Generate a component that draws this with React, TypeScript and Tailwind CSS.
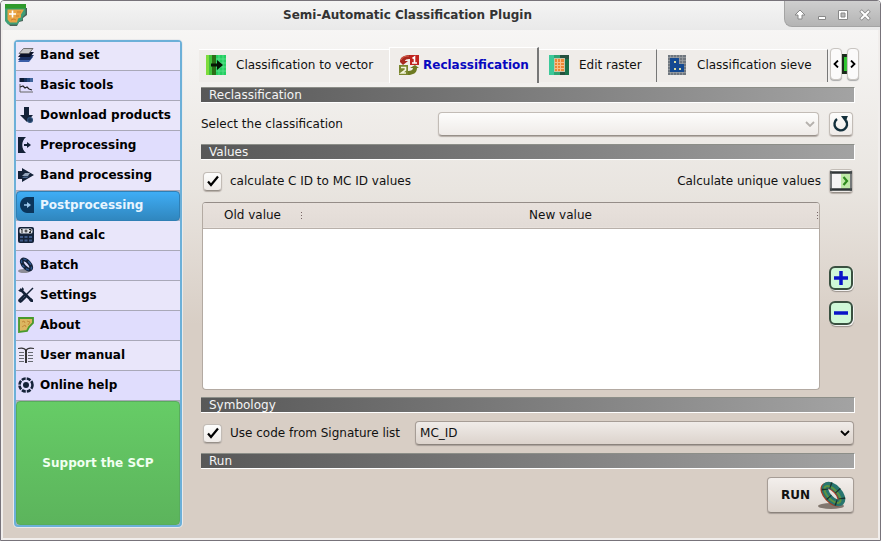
import React, { useState } from "react";

type IconProps = { className?: string };

const navy = "#142238";

function AppLogo({ className = "" }: IconProps) {
  return (
    <svg viewBox="0 0 22 22" className={className} aria-hidden="true">
      <path d="M2 4h20v7l-4 3v3l-4 1-2 4H5l-3-4z" fill="#4a6258" />
      <path d="M0 0h20.500v10l-3 3v3l-3 1-2 3.500H3L0 17z" fill="#3f9f78" />
      <path d="M0 0h21v4.500H0z" fill="#2f9a2c" />
      <path d="M2.500 5.500h16.500l-3 5v3l-3 1-1 4H5l-2.500-3z" fill="#e9a545" />
      <path d="M12 8h4M11 12h3M6 16l3-1 2 1" stroke="#cf7f2c" fill="none" />
      <path d="M7.500 6.500v7M4 10h7" stroke="#fff" strokeWidth="1.600" />
    </svg>
  );
}

function BandSetIcon() {
  return (
    <svg viewBox="0 0 16 16" className="size-4" aria-hidden="true">
      <path d="M0 15l4-5h11l-4 5z" fill="#3a5fa8" />
      <path d="M0 13l4-5h12l-4 5z" fill="#1a3060" />
      <path d="M0 10l4-5h12l-4 5z" fill="#0a1228" />
      <path d="M1 6.500l4.500-5h9.500l-4 5z" fill="#c6c6c6" stroke="#555" strokeWidth="0.800" />
    </svg>
  );
}

function BasicToolsIcon() {
  return (
    <svg viewBox="0 0 16 16" className="size-4" aria-hidden="true">
      <path d="M1.500 1H6v4H1.500z" fill="#0c1a34" />
      <path d="M6 1h3v4H6z" fill="#15305a" />
      <path d="M9 1h3v4H9z" fill="#23467a" />
      <path d="M12 1h3v4h-3z" fill="#41669c" />
      <path d="M2 7v8h13" stroke="#666" fill="none" />
      <path d="M2 10l3-1 2 2 2-1 2 2 3 1" stroke="#222" fill="none" strokeWidth="1.200" />
    </svg>
  );
}

function DownloadIcon() {
  return (
    <svg viewBox="0 0 16 16" className="size-4" aria-hidden="true">
      <path d="M6 0h5v8h4l-6 7-7-7h4z" fill={navy} />
      <circle cx="12" cy="13" r="3" fill="#2d4f77" />
      <path d="M10 13h4M12 11v4" stroke="#18304f" />
    </svg>
  );
}

function PreprocessingIcon() {
  return (
    <svg viewBox="0 0 16 16" className="size-4" aria-hidden="true">
      <path d="M0 0h8C3 4 3 12 8 16H0z" fill={navy} />
      <path d="M6 8h4" stroke={navy} strokeWidth="2" />
      <path d="M9 5l4 3-4 3z" fill={navy} />
    </svg>
  );
}

function BandProcessingIcon() {
  return (
    <svg viewBox="0 0 16 16" className="size-4" aria-hidden="true">
      <path d="M0 4h4V1l12 7-12 7v-3H0z" fill={navy} />
      <path d="M4 9l3-3h5l-2 3z" fill="#93a4bb" />
      <path d="M4 11l2-1.500h5L9 11z" fill="#49648b" />
    </svg>
  );
}

function PostprocessingIcon() {
  return (
    <svg viewBox="0 0 16 16" className="size-4" aria-hidden="true">
      <path d="M16 0v16H9C5 16 2 12 2 8s3-8 7-8z" fill="#0b355c" />
      <path d="M6 8h3" stroke="#9cc7ec" strokeWidth="1.500" />
      <path d="M9 5l4 3-4 3z" fill="#9cc7ec" />
    </svg>
  );
}

function BandCalcIcon() {
  return (
    <svg viewBox="0 0 16 16" className="size-4" aria-hidden="true">
      <rect width="16" height="16" rx="2" fill={navy} />
      <rect x="1.500" y="1.500" width="13" height="5" rx="1.500" fill="#dfe2e8" />
      <path d="M3 3l1-1v4M6.500 4h3M8 2.500v3M11 2.500h2V4l-2 1.500h2" stroke="#222" fill="none" />
      <path d="M2 9h3v2H2zM6.500 9h3v2h-3zM11 9h3v2h-3zM2 12.500h3v2H2zM6.500 12.500h3v2h-3zM11 12.500h3v2h-3z" fill="#3f5a88" />
    </svg>
  );
}

function BatchIcon() {
  return (
    <svg viewBox="0 0 16 16" className="size-4" aria-hidden="true">
      <ellipse cx="6" cy="14" rx="6" ry="2" fill="#8d8d96" />
      <ellipse cx="8.500" cy="7.500" rx="3" ry="6.200" transform="rotate(-42 8.500 7.500)" fill="none" stroke={navy} strokeWidth="3.800" />
      <ellipse cx="8.500" cy="7.500" rx="3.500" ry="6.500" transform="rotate(-42 8.500 7.500)" fill="none" stroke="#2c548c" strokeWidth="1.500" strokeDasharray="3 2" />
    </svg>
  );
}

function SettingsIcon() {
  return (
    <svg viewBox="0 0 16 16" className="size-4" aria-hidden="true">
      <path d="M2 2l12 12" stroke={navy} strokeWidth="2.500" />
      <path d="M0 3l2 2 3-1 1-2-2-2v2L2 3z" fill={navy} />
      <path d="M15 1L8 8" stroke={navy} strokeWidth="1.500" />
      <path d="M7 9l-4.500 4.500" stroke={navy} strokeWidth="4.500" strokeLinecap="round" />
      <path d="M7 9l-4 4" stroke="#53647e" strokeDasharray="1 1" />
      <path d="M11 13l2 2h2v-2l-2-2z" fill={navy} />
    </svg>
  );
}

function AboutIcon() {
  return (
    <svg viewBox="0 0 16 16" className="size-4" aria-hidden="true">
      <path d="M1 1h14v5l-4 4-2 4-8 1z" fill="#dcb660" stroke="#479a2c" strokeWidth="1.800" />
      <path d="M4 5l2-1 1 2M9 4l3 1-2 3M4 10l3-2 1 2" stroke="#c48a3c" fill="none" />
    </svg>
  );
}

function ManualIcon() {
  return (
    <svg viewBox="0 0 16 16" className="size-4" aria-hidden="true">
      <path d="M0 1.500c4-1 7 0 8 2 1-2 4-3 8-2" stroke="#333" fill="none" strokeWidth="1.200" />
      <path d="M8 3v13" stroke="#222" strokeWidth="1.800" />
      <path d="M1 5.500h5M1 8.500h5M1 11.500h5M1 14.500h5M10 5.500h5M10 8.500h5M10 11.500h5M10 14.500h5" stroke="#666a70" />
    </svg>
  );
}

function HelpIcon() {
  return (
    <svg viewBox="0 0 16 16" className="size-4" aria-hidden="true">
      <circle cx="8" cy="8" r="6.500" fill="none" stroke={navy} strokeWidth="2.600" strokeDasharray="4 1.100" />
      <circle cx="8" cy="8" r="3" fill={navy} />
    </svg>
  );
}

function VectorIcon() {
  return (
    <svg viewBox="0 0 20 20" className="size-5" aria-hidden="true">
      <path d="M0 0h10v20H0z" fill="#3f8f1e" />
      <path d="M0 0h6v20H0z" fill="#7edc3c" />
      <path d="M3 0h3v20H3z" fill="#3fbf3a" />
      <path d="M6 0h4v20H6z" fill="#2c6e18" />
      <path d="M10 0h10v20H10z" fill="#25cf62" />
      <path d="M13 0v20M17 0v20M10 4h10M10 8h10M10 12h10M10 16h10" stroke="#66e292" strokeWidth="0.700" />
      <path d="M5 8.500h6V5l6 5-6 5v-3.500H5z" fill="#051505" />
    </svg>
  );
}

function ReclassIcon() {
  return (
    <svg viewBox="0 0 20 20" className="size-5" aria-hidden="true">
      <path d="M1 7C1 2 5 0 11 0v4C7 4 6 5 6 6h3l-5 4-4-4z" fill="#a8281e" />
      <path d="M2 5c1-3 4-4 8-4" stroke="#d8604c" fill="none" />
      <rect x="11" width="9" height="10" fill="#c02420" />
      <path d="M13.500 3.500l2-1.500v6M13 8h5" stroke="#fff" strokeWidth="1.600" fill="none" />
      <rect y="10" width="9" height="10" fill="#7a862e" />
      <path d="M2 12.500h4.500v2.500L2.500 18H7" stroke="#f4f4dc" strokeWidth="1.600" fill="none" />
      <path d="M9 16c3 0 5-1 5-3h-3l5-3 4 3h-2c0 5-4 7-9 7z" fill="#6e7a22" />
    </svg>
  );
}

function EditRasterIcon() {
  return (
    <svg viewBox="0 0 20 20" className="size-5" aria-hidden="true">
      <rect width="20" height="20" fill="#25513f" />
      <path d="M0 0h5v20H0z" fill="#3cc99a" />
      <path d="M5 0h6v20H5z" fill="#2fa473" />
      <path d="M16 4h4v16h-4z" fill="#18724a" />
      <rect x="5.500" y="3.500" width="10" height="13" fill="#ef8634" stroke="#c9c2a6" />
      <path d="M8.500 4v12M11.500 4v12M6 7.500h9M6 10.500h9M6 13.500h9" stroke="#f8c18a" />
    </svg>
  );
}

function SieveIcon() {
  return (
    <svg viewBox="0 0 18 20" className="h-5 w-[18px]" aria-hidden="true">
      <rect width="18" height="20" fill="#70777f" />
      <path d="M2.500 0v20M5.500 0v20M8.500 0v20M11.500 0v20M14.500 0v20M0 2.500h18M0 5.500h18M0 8.500h18M0 11.500h18M0 14.500h18M0 17.500h18" stroke="#9fa3a8" strokeWidth="0.700" />
      <path d="M2 3h9v6h5v8H2z" fill="#154a92" />
      <path d="M6 6h2v2H6zM6 13h2v2H6zM11 13h2v2h-2z" fill="#d9dca0" />
    </svg>
  );
}

function RunIcon() {
  return (
    <svg viewBox="0 0 30 28" className="h-7 w-[30px]" aria-hidden="true">
      <ellipse cx="14" cy="25" rx="13" ry="3" fill="#81766e" />
      <ellipse cx="15" cy="13.500" rx="5.500" ry="11" transform="rotate(-43 15 13.500)" fill="none" stroke="#a33d22" strokeWidth="6" />
      <ellipse cx="16.500" cy="13" rx="5.500" ry="11" transform="rotate(-43 16.500 13)" fill="none" stroke="#28756f" strokeWidth="6.500" />
      <ellipse cx="15.500" cy="13.500" rx="5" ry="10.500" transform="rotate(-43 15.500 13.500)" fill="none" stroke="#5f9440" strokeWidth="2" />
      <ellipse cx="16.500" cy="13" rx="5.500" ry="11" transform="rotate(-43 16.500 13)" fill="none" stroke="#17332f" strokeWidth="6.500" strokeDasharray="1.200 7.600" />
    </svg>
  );
}

function CheckMark() {
  return (
    <svg viewBox="0 0 12 12" className="pointer-events-none col-start-1 row-start-1 size-3" aria-hidden="true">
      <path d="M1 6.500L4 10 11 1.500" stroke="#000" strokeWidth="2.200" fill="none" />
    </svg>
  );
}

function Chevron({ color }: { color: string }) {
  return (
    <svg viewBox="0 0 10 6" className="pointer-events-none col-start-1 row-start-1 mr-1 h-1.5 w-2.5 justify-self-end" aria-hidden="true">
      <path d="M1 1l4 4 4-4" stroke={color} strokeWidth="1.800" fill="none" />
    </svg>
  );
}

const menu = [
  { label: "Band set", Icon: BandSetIcon },
  { label: "Basic tools", Icon: BasicToolsIcon },
  { label: "Download products", Icon: DownloadIcon },
  { label: "Preprocessing", Icon: PreprocessingIcon },
  { label: "Band processing", Icon: BandProcessingIcon },
  { label: "Postprocessing", Icon: PostprocessingIcon },
  { label: "Band calc", Icon: BandCalcIcon },
  { label: "Batch", Icon: BatchIcon },
  { label: "Settings", Icon: SettingsIcon },
  { label: "About", Icon: AboutIcon },
  { label: "User manual", Icon: ManualIcon },
  { label: "Online help", Icon: HelpIcon },
];

function TitleBar() {
  return (
    <header className="flex h-[29px] flex-none items-start bg-linear-to-b from-[#f4f4f4] to-[#e9e9e9]">
      <AppLogo className="mt-[3px] ml-1 size-[22px]" />
      <h1 className="flex-1 pt-1.5 pl-1 text-center leading-4 font-bold text-[#333]">
        Semi-Automatic Classification Plugin
      </h1>
      <div className="flex h-[26px] w-24 items-center justify-around rounded-bl-lg border-b border-l border-[#a4a4a4] bg-linear-to-b from-[#cfcfcf] to-[#b4b4b4] px-1 pt-0.5">
        <button aria-label="Shade" className="size-3">
          <svg viewBox="0 0 12 12"><path d="M6 1l5 5H8v4H4V6H1z" fill="#fff" stroke="#888" /></svg>
        </button>
        <button aria-label="Minimize" className="size-3">
          <svg viewBox="0 0 12 12"><path d="M2.500 7.500h7v3h-7z" fill="#fff" stroke="#888" /></svg>
        </button>
        <button aria-label="Maximize" className="size-3">
          <svg viewBox="0 0 12 12"><path d="M1.500 1.500h9v9h-9z" fill="#fff" stroke="#888" /><path d="M4 4h4v4H4z" fill="#bbb" stroke="#888" /></svg>
        </button>
        <button aria-label="Close" className="size-3">
          <svg viewBox="0 0 12 12"><path d="M1.500 1.500l9 9M10.500 1.500l-9 9" stroke="#888" strokeWidth="3.500" /><path d="M2 2l8 8M10 2l-8 8" stroke="#fff" strokeWidth="2" /></svg>
        </button>
      </div>
    </header>
  );
}

function Sidebar() {
  return (
    <nav className="flex w-42 flex-none flex-col rounded border-2 border-[#6cb0d8] bg-[#aeb4c4] font-bold shadow-[0_0_0_1px_#e9eaec]">
      {menu.map(({ label, Icon }) => (
        <button
          key={label}
          className={
            label === "Postprocessing"
              ? "flex h-[30px] items-center gap-1.5 rounded border border-[#2f7fb5] bg-linear-to-b from-[#3fadf5] to-[#3087bf] pb-0.5 pl-px text-left text-[#e8f5ff]"
              : "flex h-[30px] items-center gap-1.5 border-b border-[#a9a8b8] bg-[#e9e6fa] pb-0.5 pl-0.5 text-left text-black first:h-[29px] even:bg-[#e0ddfd]"
          }
        >
          <Icon />
          {label}
        </button>
      ))}
      <button className="flex-1 rounded border border-[#58ad5c] bg-linear-to-b from-[#66cc66] to-[#5cb45c] text-[#f0fff0]">
        Support the SCP
      </button>
    </nav>
  );
}

function SectionTitle({ children }: { children: React.ReactNode }) {
  return (
    <h2 className="-mr-px h-4 flex-none border-t border-r border-b border-t-[#8c8e88] border-r-white border-b-white bg-linear-to-r from-[#585858] to-[#a3a3a3] pl-2 leading-[14px] text-[#f4f4f4]">
      {children}
    </h2>
  );
}

const raised =
  "border border-[#c2bcb6] border-b-[#979089] bg-linear-to-b from-[#fdfdfc] to-[#efebe8] shadow-[0_1px_1px_#b5ada7]";

function Tabs() {
  const plain = "mt-0.5 flex h-[33px] items-center border-t border-white bg-[#efece9] pb-0.5";
  return (
    <div className="-ml-0.5 flex h-9 flex-none items-start">
      <div role="tablist" className="flex min-w-0 flex-1 overflow-hidden">
        <button role="tab" aria-selected="false" className={plain + " w-[190px] flex-none gap-2.5 pl-[7px]"}>
          <VectorIcon />
          Classification to vector
        </button>
        <button role="tab" aria-selected="true" className="flex h-9 w-[150px] flex-none items-center gap-1 border-t border-r-2 border-l border-white border-r-[#777] bg-[#f0edea] pb-0.5 pl-[9px] font-bold text-[#0808c0]">
          <ReclassIcon />
          Reclassification
        </button>
        <button role="tab" aria-selected="false" className={plain + " w-[118px] flex-none gap-2.5 border-r border-r-[#777] pl-2.5"}>
          <EditRasterIcon />
          Edit raster
        </button>
        <button role="tab" aria-selected="false" className={plain + " w-[171px] flex-none gap-[11px] border-r border-r-[#777] pl-[11px]"}>
          <SieveIcon />
          Classification sieve
        </button>
      </div>
      <div className="-mr-[5px] flex h-[34px] flex-none items-center">
        <button aria-label="Scroll tabs left" className="flex h-8 w-3 items-center justify-center rounded border border-[#c9c5c1] bg-[#fbfafa] shadow-[0_1px_1px_#aaa]">
          <svg viewBox="0 0 6 8" className="h-2 w-1.5 flex-none" aria-hidden="true"><path d="M5 0.500L1.500 4 5 7.500" stroke="#000" strokeWidth="1.800" fill="none" /></svg>
        </button>
        <svg viewBox="0 0 5 20" className="h-5 w-[5px]" aria-hidden="true">
          <path d="M0 0h5v20H0z" fill="#1b2a1b" />
          <path d="M2 3h3v14H2z" fill="#2fc52f" />
        </svg>
        <button aria-label="Scroll tabs right" className="flex h-8 w-3 items-center justify-center rounded border border-[#c9c5c1] bg-[#fbfafa] shadow-[0_1px_1px_#aaa]">
          <svg viewBox="0 0 6 8" className="h-2 w-1.5 flex-none" aria-hidden="true"><path d="M1 0.500L4.500 4 1 7.500" stroke="#000" strokeWidth="1.800" fill="none" /></svg>
        </button>
      </div>
    </div>
  );
}

function CheckField({ id, label }: { id: string; label: string }) {
  const [on, setOn] = useState(true);
  return (
    <div className="flex items-center gap-2">
      <span className="ml-0.5 grid size-[19px] place-items-center">
        <input
          id={id}
          type="checkbox"
          checked={on}
          onChange={() => setOn(!on)}
          className={"col-start-1 row-start-1 size-[19px] appearance-none rounded " + raised}
        />
        {on && <CheckMark />}
      </span>
      <label htmlFor={id}>{label}</label>
    </div>
  );
}

function Grip() {
  return (
    <span className="flex flex-col gap-0.5" aria-hidden="true">
      <i className="size-px bg-[#766]" />
      <i className="size-px bg-[#766]" />
      <i className="size-px bg-[#766]" />
    </span>
  );
}

const rowButton =
  "flex size-6 items-center justify-center rounded-md border-2 border-[#3a5040] bg-[#cff8d8] shadow-[1px_1px_1px_#fff,1px_2px_1px_#8f8780]";

export default function App() {
  return (
    <div className="flex min-h-screen flex-col overflow-hidden rounded-t border border-[#77737a] bg-linear-to-b from-[#f7f6f5] from-5% via-[#e9e5e0] via-35% to-[#d8cec5] to-60% font-['DejaVu_Sans',sans-serif] text-[12px] leading-4 text-[#111]">
      <TitleBar />
      <div className="flex flex-1 gap-[19px] border-r-2 border-b-2 border-l-2 border-[#f1eeec] pr-6 pb-[11px] pl-[11px]">
        <div className="flex flex-none pt-2.5">
          <Sidebar />
        </div>
        <main className="flex min-w-0 flex-1 flex-col pt-[17px]">
          <Tabs />
          <div className="h-1 flex-none" />
          <SectionTitle>Reclassification</SectionTitle>
          <div className="flex h-[41px] flex-none items-center pr-px">
            <label htmlFor="classification" className="w-[237px]">Select the classification</label>
            <span className="grid flex-1 items-center">
              <select id="classification" className={"col-start-1 row-start-1 h-6 w-full appearance-none rounded px-1 " + raised}>
                <option value="" />
              </select>
              <Chevron color="#b5b1ad" />
            </span>
            <button aria-label="Refresh list" className={"ml-2.5 flex size-6 items-center justify-center rounded " + raised}>
              <svg viewBox="0 0 18 18" className="size-[18px]" aria-hidden="true">
                <path d="M5 4A6.300 6.300 0 1 0 14 5.500" stroke="#14303c" strokeWidth="2.400" fill="none" />
                <path d="M9 1h7l-1 2-1 5z" fill="#14303c" />
              </svg>
            </button>
          </div>
          <SectionTitle>Values</SectionTitle>
          <div className="flex h-[42px] flex-none items-center justify-between pr-px">
            <CheckField id="calc" label="calculate C ID to MC ID values" />
            <div className="flex items-center gap-2">
              <label htmlFor="unique">Calculate unique values</label>
              <button id="unique" className={"flex size-6 items-center justify-center rounded " + raised}>
                <svg viewBox="0 0 22 20" className="h-5 w-[22px] flex-none" aria-hidden="true">
                  <path d="M1 1h20v18H1z" fill="#f4f4f4" />
                  <path d="M11 2h9v16h-9z" fill="#bfe9a8" />
                  <path d="M0 1.500h22M0 18.500h22" stroke="#2e3436" strokeWidth="2.500" />
                  <path d="M1 0v20M21 0v20" stroke="#4a4f50" strokeWidth="1.500" />
                  <path d="M13.500 6l3.500 4-3.500 4" stroke="#2e8b1e" strokeWidth="2.200" fill="none" />
                </svg>
              </button>
            </div>
          </div>
          <div className="flex flex-1 gap-[9px] pl-px">
            <div className="flex-1 overflow-hidden rounded border border-[#b3aaa2] border-t-[#958d88] bg-white">
              <table className="w-full table-fixed border-collapse">
                <thead>
                  <tr className="h-[25px] border-b border-[#b8b0aa] bg-linear-to-b from-[#e8e1dc] to-[#e2dbd6]">
                    <th scope="col" className="w-[99px] p-0 pl-px font-normal">
                      <span className="flex items-center"><span className="flex-1">Old value</span><Grip /></span>
                    </th>
                    <th scope="col" className="p-0 pr-px pl-0.5 font-normal">
                      <span className="flex items-center"><span className="flex-1">New value</span><Grip /></span>
                    </th>
                  </tr>
                </thead>
                <tbody />
              </table>
            </div>
            <div className="mr-px flex w-6 flex-none flex-col justify-center gap-[11px] pb-0.5">
              <button aria-label="Add row" className={rowButton}>
                <svg viewBox="0 0 16 16" className="size-4" aria-hidden="true"><path d="M8 1v14M1 8h14" stroke="#0a14c8" strokeWidth="3.500" /></svg>
              </button>
              <button aria-label="Remove row" className={rowButton}>
                <svg viewBox="0 0 16 16" className="size-4" aria-hidden="true"><path d="M1 8h14" stroke="#0a14c8" strokeWidth="3.500" /></svg>
              </button>
            </div>
          </div>
          <div className="h-[7px] flex-none" />
          <SectionTitle>Symbology</SectionTitle>
          <div className="flex h-10 flex-none items-center gap-[15px]">
            <CheckField id="usecode" label="Use code from Signature list" />
            <span className="grid flex-1 items-center">
              <select aria-label="Signature code field" className="col-start-1 row-start-1 h-6 w-full appearance-none rounded border border-[#a69d96] border-b-[#8b837c] bg-linear-to-b from-[#f0ece9] to-[#dcd3cc] px-1 shadow-[0_1px_1px_#a89f98]">
                <option>MC_ID</option>
              </select>
              <Chevron color="#000" />
            </span>
          </div>
          <SectionTitle>Run</SectionTitle>
          <div className="flex flex-none justify-end pt-2 pb-3.5">
            <button className="flex h-9 w-[87px] items-center justify-end gap-[7px] rounded border border-[#a69d96] border-b-[#8b837c] bg-linear-to-b from-[#f3efec] to-[#dcd4cd] pr-1.5 font-bold shadow-[0_1px_1px_#a89f98]">
              RUN
              <RunIcon />
            </button>
          </div>
        </main>
      </div>
    </div>
  );
}
